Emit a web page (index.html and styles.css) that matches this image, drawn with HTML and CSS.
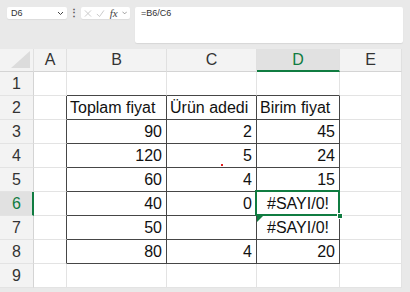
FILE: index.html
```html
<!DOCTYPE HTML><html>
<head>
  <title>Birim fiyat</title>
  <meta name="viewport" content="width=device-width, initial-scale=1">
  <link rel="stylesheet" href="styles.css">
</head>
<body>
  <div class="toolbar">
    <div class="namebox"><span>D6</span>
      <svg width="7" height="5" viewBox="0 0 7 5"><path d="M1 1 L3.5 3.5 L6 1" fill="none" stroke="#444" stroke-width="1"/></svg>
    </div>
    <div class="dots">&#8942;</div>
    <div class="fnbox">
      <svg width="9" height="9" viewBox="0 0 9 9"><path d="M1 1 L8 8 M8 1 L1 8" stroke="#c4c4c4" stroke-width="1"/></svg>
      <svg width="10" height="9" viewBox="0 0 10 9"><path d="M1 5 L4 8 L9 1" fill="none" stroke="#c4c4c4" stroke-width="1"/></svg>
      <span class="fx">fx</span>
      <svg width="6" height="4" viewBox="0 0 6 4"><path d="M0.5 0.5 L3 3 L5.5 0.5" fill="none" stroke="#777" stroke-width="0.8"/></svg>
    </div>
    <div class="formula">=B6/C6</div>
  </div>
  <div class="sheet">
    <div class="grid">
      <div class="hd corner"><span class="tri"></span></div>
      <div class="hd">A</div><div class="hd">B</div><div class="hd">C</div><div class="hd hsel">D</div><div class="hd">E</div>

      <div class="rh">1</div><div class="c"></div><div class="c tt"></div><div class="c tt"></div><div class="c tt"></div><div class="c"></div>
      <div class="rh">2</div><div class="c tl"></div><div class="c t">Toplam fiyat</div><div class="c t">Ürün adedi</div><div class="c t">Birim fiyat</div><div class="c"></div>
      <div class="rh">3</div><div class="c tl"></div><div class="c t n">90</div><div class="c t n">2</div><div class="c t n">45</div><div class="c"></div>
      <div class="rh">4</div><div class="c tl"></div><div class="c t n">120</div><div class="c t n mark">5<span class="dot"></span></div><div class="c t n">24</div><div class="c"></div>
      <div class="rh">5</div><div class="c tl"></div><div class="c t n">60</div><div class="c t n">4</div><div class="c t n">15</div><div class="c"></div>
      <div class="rh rsel">6</div><div class="c tl"></div><div class="c t n">40</div><div class="c t n">0</div><div class="c t m sel">#SAYI/0!</div><div class="c"></div>
      <div class="rh">7</div><div class="c tl"></div><div class="c t n">50</div><div class="c t n"></div><div class="c t m err">#SAYI/0!</div><div class="c"></div>
      <div class="rh">8</div><div class="c tl"></div><div class="c t n">80</div><div class="c t n">4</div><div class="c t n">20</div><div class="c"></div>
      <div class="rh">9</div><div class="c"></div><div class="c"></div><div class="c"></div><div class="c"></div><div class="c"></div>
    </div>
  </div>
</body>
</html>
```
FILE: styles.css
```css
body {margin: 0; background: #e9e9e9; font-family: "Liberation Sans", Arial, sans-serif; width: 410px; height: 292px; overflow: hidden;}
.toolbar {display: flex; align-items: flex-start; padding: 7px 7px 6px 7px; height: 36px;}
.namebox {width: 60px; height: 12px; box-sizing: border-box; background: #fff; border-radius: 2px; display: flex; align-items: center; justify-content: space-between; padding: 0 3px 0 4px; font-size: 9px; color: #333; box-shadow: 0 1px 1px rgba(0,0,0,0.06);}
.dots {width: 14px; text-align: center; color: #555; font-size: 10px; line-height: 12px; font-weight: bold;}
.fnbox {width: 49px; height: 12px; box-sizing: border-box; background: #fff; border-radius: 2px; display: flex; align-items: center; gap: 4px; padding: 0 3px; box-shadow: 0 1px 1px rgba(0,0,0,0.06);}
.fx {font-family: "Liberation Serif", serif; font-style: italic; font-size: 11px; color: #444; margin-left: 1px;}
.formula {flex: 1; height: 36px; margin-left: 5px; box-sizing: border-box; background: #fff; border-radius: 2px; font-size: 9px; line-height: 12px; color: #333; padding: 0 6px; box-shadow: 0 1px 1px rgba(0,0,0,0.08);}
.sheet {display: flex;}
.grid {display: grid; grid-template-columns: 34px 33px 100px 90px 83px 62px; grid-template-rows: 23px repeat(9, 24px); background: #fff;}
.hd, .rh, .c {box-sizing: border-box; border-right: 1px solid #e3e3e3; border-bottom: 1px solid #e3e3e3; white-space: nowrap; overflow: hidden;}
.hd {background: #f3f3f3; color: #333; font-size: 16px; line-height: 22px; text-align: center; border-bottom-color: #d4d4d4; border-right-color: #e0e0e0;}
.corner {display: flex; justify-content: flex-end; align-items: flex-end; padding: 0 3px 3px 0; overflow: visible;}
.tri {width: 0; height: 0; border-left: 19px solid transparent; border-bottom: 17px solid #dcdcdc;}
.hsel {background: #e1e1e1; color: #107c41; border-bottom: 2px solid #107c41;}
.rh {background: #f3f3f3; color: #333; font-size: 16px; line-height: 23px; padding-left: 12px; border-right-color: #d4d4d4;}
.rsel {background: #e1e1e1; color: #107c41; border-right: 2px solid #107c41;}
.c {font-size: 16px; line-height: 23px; padding: 0 3px; color: #111;}
.t {border-right-color: #464646; border-bottom-color: #464646;}
.tt {border-bottom-color: #464646;}
.tl {border-right-color: #464646;}
.n {text-align: right; padding-right: 4px;}
.m {text-align: center;}
.mark {position: relative; overflow: visible;}
.dot {position: absolute; left: 54px; top: 20px; width: 2px; height: 2px; background: #e02020;}
.sel {position: relative; overflow: visible; z-index: 2;}
.sel::after {content: ""; position: absolute; left: -2px; top: -2px; right: -1px; bottom: -1px; border: 2px solid #107c41;}
.sel::before {content: ""; position: absolute; right: -4px; bottom: -4px; width: 4px; height: 4px; background: #107c41; border: 1px solid #fff; z-index: 3;}
.err {position: relative;}
.err::before {content: ""; position: absolute; left: 0; top: 0; border-top: 6px solid #107c41; border-right: 6px solid transparent;}
```
